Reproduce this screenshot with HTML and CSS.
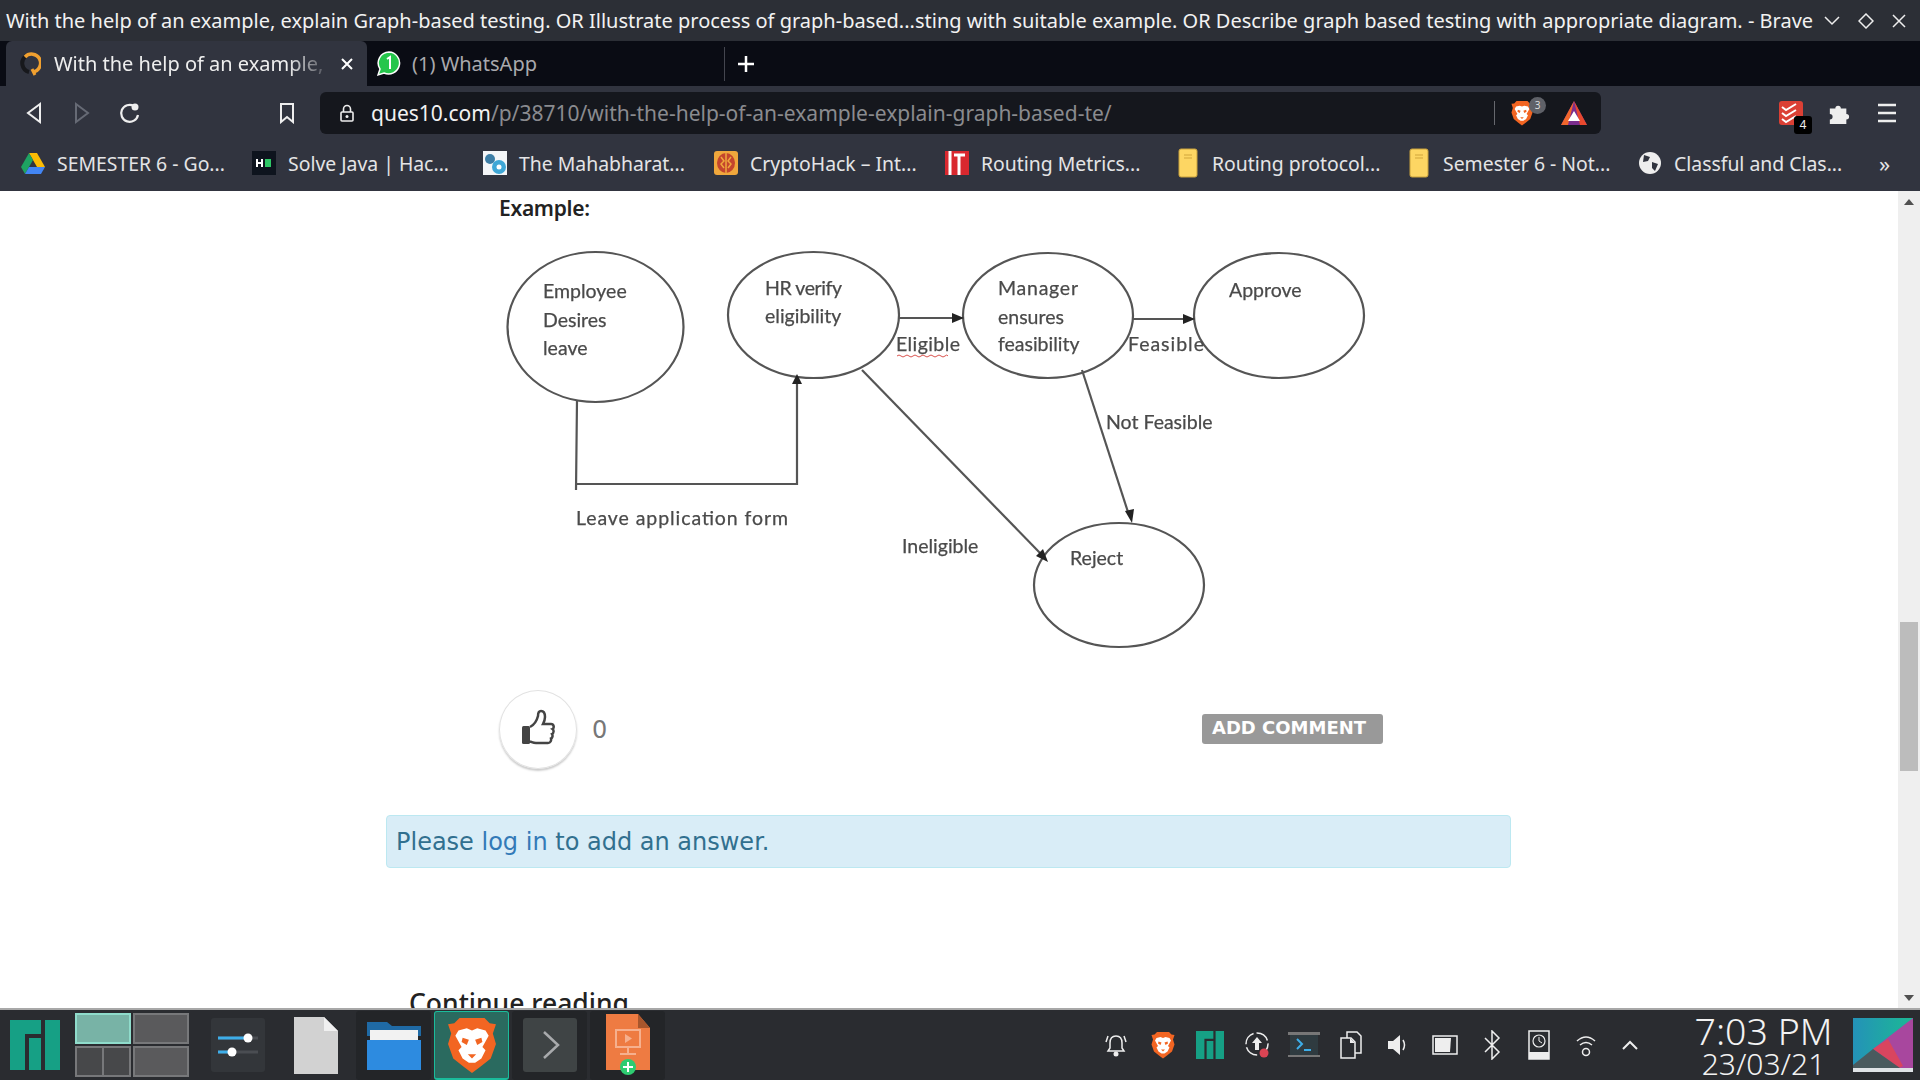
FILE: index.html
```html
<!DOCTYPE html>
<html lang="en">
<head>
    <meta charset="UTF-8">
    <title>With the help of an example, explain Graph-based testing</title>
    <link rel="stylesheet" href="styles.css">
</head>
<body>
    <svg class="defs" width="0" height="0">
        <defs>
            <linearGradient id="wall" x1="0" y1="0" x2="1" y2="0">
                <stop offset="0" stop-color="#2492b8"/>
                <stop offset="1" stop-color="#1cb994"/>
            </linearGradient>
        </defs>
        <symbol id="lion" viewBox="0 0 48 56">
            <path d="M12 2h24l5 5 6 1-3 9 3 10-5 14-10 8-8 6-8-6-10-8L1 27l3-10-3-9 6-1z" fill="#f26522"/>
            <path d="M11 14l8-2 5 2 5-2 8 2 3 5-6 11 3 3-4 8-6 4h-6l-6-4-4-8 3-3-6-11z" fill="#fff"/>
            <path d="M15 21l6 2-2 5-5-3zM33 21l-6 2 2 5 5-3zM20 37h8l-4 4z" fill="#f26522"/>
        </symbol>
        <symbol id="manjaro" viewBox="0 0 50 50">
            <path d="M0 0h31v14H15v36H0zM19 18h12v32H19zM35 0h15v50H35z" fill="#16a085"/>
        </symbol>
        <symbol id="note" viewBox="0 0 20 30">
            <rect x="1" y="1" width="18" height="28" rx="2" fill="#fdd663" stroke="#c9a13c"/>
            <path d="M6 7h8M6 10h8" stroke="#e0b64a" stroke-width="1.5"/>
        </symbol>
    </svg>

    <header class="titlebar">
        <span class="title-text">With the help of an example, explain Graph-based testing. OR Illustrate process of graph-based...sting with suitable example. OR Describe graph based testing with appropriate diagram. - Brave</span>
        <div class="win-buttons">
            <svg width="16" height="10" viewBox="0 0 16 10"><path d="M1 1l7 7 7-7" fill="none" stroke="#eee" stroke-width="1.5"/></svg>
            <svg width="16" height="16" viewBox="0 0 16 16"><path d="M8 1l7 7-7 7-7-7z" fill="none" stroke="#eee" stroke-width="1.5"/></svg>
            <svg width="14" height="14" viewBox="0 0 14 14"><path d="M1 1l12 12M13 1L1 13" stroke="#eee" stroke-width="1.5"/></svg>
        </div>
    </header>

    <div class="tabstrip">
        <div class="tab tab-active">
            <svg width="21" height="24" viewBox="0 0 21 24"><path d="M6 4a9 9 0 0 0 3 16" fill="none" stroke="#17181c" stroke-width="4"/><path d="M5 5a9 9 0 1 1 8 15" fill="none" stroke="#f0a030" stroke-width="3.500"/><path d="M12 17l3 6" stroke="#f0a030" stroke-width="3"/></svg>
            <span class="tab-title tab-fade">With the help of an example,</span>
            <svg class="tab-close" width="14" height="14" viewBox="0 0 14 14"><path d="M2 2l10 10M12 2L2 12" stroke="#fff" stroke-width="2"/></svg>
        </div>
        <div class="tab">
            <svg width="24" height="26" viewBox="0 0 24 26"><path d="M12 1a11 11 0 1 1-5 21l-6 2 2-6A11 11 0 0 1 12 1z" fill="#25c64b" stroke="#fff" stroke-width="1.5"/><path d="M10 8l3-2v12" fill="none" stroke="#fff" stroke-width="2"/></svg>
            <span class="tab-title tab-muted">(1) WhatsApp</span>
        </div>
        <div class="tab-sep"></div>
        <svg class="tab-new" width="18" height="18" viewBox="0 0 18 18"><path d="M9 1v16M1 9h16" stroke="#fff" stroke-width="2.5"/></svg>
    </div>

    <div class="toolbar">
        <svg class="tb-back" width="16" height="22" viewBox="0 0 16 22"><path d="M14 2L2 11l12 9z" fill="none" stroke="#eee" stroke-width="2"/></svg>
        <svg class="tb-fwd" width="16" height="22" viewBox="0 0 16 22"><path d="M2 2l12 9-12 9z" fill="none" stroke="#666a75" stroke-width="2"/></svg>
        <svg class="tb-reload" width="22" height="22" viewBox="0 0 22 22"><path d="M16 4a8.500 8.500 0 1 0 4 9" fill="none" stroke="#eee" stroke-width="2.200"/><circle cx="17" cy="5" r="3.500" fill="#eee"/></svg>
        <svg class="tb-mark" width="16" height="22" viewBox="0 0 16 22"><path d="M2 2h12v18l-6-5-6 5z" fill="none" stroke="#eee" stroke-width="2"/></svg>
        <div class="urlbar">
            <svg width="14" height="18" viewBox="0 0 14 18"><path d="M3.500 8V5a3.500 3.500 0 0 1 7 0v3" fill="none" stroke="#eee" stroke-width="1.600"/><rect x="1" y="8" width="12" height="9" rx="1" fill="none" stroke="#eee" stroke-width="1.600"/><circle cx="7" cy="12.500" r="1.500" fill="#eee"/></svg>
            <span class="url"><span class="url-host">ques10.com</span>/p/38710/with-the-help-of-an-example-explain-graph-based-te/</span>
            <div class="url-sep"></div>
            <div class="shield">
                <svg width="22" height="26"><use href="#lion"/></svg>
                <span class="shield-badge">3</span>
            </div>
            <svg class="bat" width="28" height="26" viewBox="0 0 28 26"><path d="M14 1l13 24H1z" fill="#7b2d8e"/><path d="M14 1l13 24H20z" fill="#e8492e"/><path d="M14 1L1 25h7z" fill="#f2672c"/><path d="M14 11l6 10H8z" fill="#fff"/></svg>
        </div>
        <div class="ext ext-todo">
            <svg width="24" height="24" viewBox="0 0 24 24"><rect width="24" height="24" rx="3" fill="#db4035"/><path d="M3 6l4 3 10-6M3 12l4 3 10-6M3 18l4 3 10-6" fill="none" stroke="#fff" stroke-width="2"/></svg>
            <span class="ext-badge">4</span>
        </div>
        <svg class="ext-puzzle" width="22" height="22" viewBox="0 0 22 24"><path d="M1 7h6a3 3 0 1 1 6 0h6v6a3 3 0 1 1 0 6v5H1v-5a3 3 0 1 0 0-6z" fill="#eee"/></svg>
        <svg class="menu" width="18" height="20" viewBox="0 0 18 20"><path d="M0 2h18M0 10h18M0 18h18" stroke="#eee" stroke-width="2.500"/></svg>
    </div>

    <nav class="bookmarks">
        <a class="bm">
            <svg width="24" height="22" viewBox="0 0 24 22"><path d="M8 1h8l8 14h-8z" fill="#fbbc04"/><path d="M8 1L0 15l4 7 8-14z" fill="#1ea362"/><path d="M4 22h16l4-7H8z" fill="#4285f4"/></svg>
            <span>SEMESTER 6 - Go...</span>
        </a>
        <a class="bm">
            <svg width="24" height="24" viewBox="0 0 24 24"><rect width="24" height="24" fill="#0e141e"/><path d="M5 8v8M10 8v8M5 12h5" stroke="#fff" stroke-width="2"/><rect x="13" y="8" width="6" height="8" fill="#2ec866"/></svg>
            <span>Solve Java | Hac...</span>
        </a>
        <a class="bm">
            <svg width="24" height="24" viewBox="0 0 24 24"><rect width="24" height="24" fill="#f4f6f8"/><circle cx="7" cy="8" r="5" fill="#3d7ea6"/><circle cx="16" cy="16" r="7" fill="#3fa7d6"/><circle cx="16" cy="16" r="2.500" fill="#fff"/></svg>
            <span>The Mahabharat...</span>
        </a>
        <a class="bm">
            <svg width="24" height="24" viewBox="0 0 24 24"><rect width="24" height="24" rx="3" fill="#f0a73c"/><ellipse cx="12" cy="12" rx="9" ry="10" fill="#c4452d"/><path d="M12 2v20M7 6l3 4-3 3 3 4M17 6l-3 4 3 3-3 4" fill="none" stroke="#f0a73c" stroke-width="1.500"/></svg>
            <span>CryptoHack – Int...</span>
        </a>
        <a class="bm">
            <svg width="24" height="24" viewBox="0 0 24 24"><rect width="24" height="24" fill="#d9282f"/><path d="M5 0v24M14 4v20" stroke="#fff" stroke-width="3"/><path d="M9 4h11" stroke="#fff" stroke-width="3"/></svg>
            <span>Routing Metrics...</span>
        </a>
        <a class="bm">
            <svg class="bm-note" width="20" height="30"><use href="#note"/></svg>
            <span>Routing protocol...</span>
        </a>
        <a class="bm">
            <svg class="bm-note" width="20" height="30"><use href="#note"/></svg>
            <span>Semester 6 - Not...</span>
        </a>
        <a class="bm">
            <svg width="24" height="24" viewBox="0 0 24 24"><circle cx="12" cy="12" r="11" fill="#eee"/><path d="M6 4l6 2-2 4-5 1zM14 11l6 2-3 7-3-3z" fill="#31343f"/></svg>
            <span>Classful and Clas...</span>
        </a>
        <span class="bm-more">»</span>
    </nav>

    <div class="page">
        <main class="content">
            <div class="answer">
                <p class="example-label">Example:</p>
                <svg class="diagram" width="880" height="420" viewBox="500 240 880 420">
                    <g class="shapes">
                        <ellipse cx="595.500" cy="327" rx="88" ry="75"/>
                        <ellipse cx="813.500" cy="315" rx="85.500" ry="63"/>
                        <ellipse cx="1048" cy="315.500" rx="85" ry="62.500"/>
                        <ellipse cx="1279" cy="315.500" rx="85" ry="62.500"/>
                        <ellipse cx="1119" cy="585" rx="85" ry="62"/>
                        <path d="M577 400L576 490M576 484H797V382"/>
                        <path d="M899 318H953"/>
                        <path d="M1133 319H1184"/>
                        <path d="M862 370L1040 553"/>
                        <path d="M1082 370L1128 512"/>
                        <path class="squiggle" d="M897 356q2-2 4 0t4 0 4 0 4 0 4 0 4 0 4 0 4 0 4 0 4 0 4 0 4 0 3 0"/>
                    </g>
                    <g class="heads">
                        <polygon points="797,374 792,384 802,384"/>
                        <polygon points="964,318 952,313 952,323"/>
                        <polygon points="1195,319 1183,314 1183,324"/>
                        <polygon points="1048,562 1036,556 1043,549"/>
                        <polygon points="1132,523 1125,511 1134,509"/>
                    </g>
                    <g class="labels">
                        <text x="543" y="298">Employee</text>
                        <text x="543" y="327">Desires</text>
                        <text x="543" y="355">leave</text>
                        <text x="765" y="295" textLength="77">HR verify</text>
                        <text x="765" y="323">eligibility</text>
                        <text x="896" y="351" textLength="64">Eligible</text>
                        <text x="998" y="295" textLength="80">Manager</text>
                        <text x="998" y="324">ensures</text>
                        <text x="998" y="351">feasibility</text>
                        <text x="1128" y="351" textLength="76">Feasible</text>
                        <text x="1229" y="297">Approve</text>
                        <text x="1106" y="429">Not Feasible</text>
                        <text x="576" y="525" textLength="212">Leave application form</text>
                        <text x="902" y="553">Ineligible</text>
                        <text x="1070" y="565">Reject</text>
                    </g>
                </svg>
                <div class="vote-row">
                    <div class="vote">
                        <div class="vote-circle">
                            <svg class="thumb-icon" width="34" height="37" viewBox="0 0 34 37"><rect x="1" y="17" width="8" height="18" rx="1.500" fill="#444"/><path d="M9 18c4-2 7-7 8-11 0-3 1-5 3-5 3 0 4 3 4 6 0 3-1 5-2 7h8c3 0 3.500 4 1.500 5 1.500 1 1.500 4-.5 5 1 1.500.5 4-1 4.500.5 2-.5 4.500-3 4.500H15c-3 0-4-1-6-1.500" fill="none" stroke="#444" stroke-width="2.500"/></svg>
                        </div>
                        <span class="vote-count">0</span>
                    </div>
                    <a class="btn-comment">ADD COMMENT</a>
                </div>
                <div class="alert">Please <a class="alert-link">log in</a> to add an answer.</div>
                <h3 class="continue">Continue reading</h3>
            </div>
        </main>
        <div class="scrollbar">
            <span class="arrow-up"></span>
            <div class="thumb"></div>
            <span class="arrow-down"></span>
        </div>
    </div>

    <footer class="panel">
        <svg class="kicker" width="50" height="50"><use href="#manjaro"/></svg>
        <div class="pager">
            <div class="desk desk-on"></div>
            <div class="desk"></div>
            <div class="desk desk-split"><i></i><i></i></div>
            <div class="desk"></div>
        </div>
        <svg class="launcher-mixer" width="54" height="54" viewBox="0 0 54 54"><rect width="54" height="54" rx="3" fill="#33363a"/><path d="M7 20h40M7 34h40" stroke="#4a4d52" stroke-width="3"/><path d="M7 20h30M7 34h14" stroke="#3daee9" stroke-width="3"/><circle cx="37" cy="20" r="4.500" fill="#fff"/><circle cx="21" cy="34" r="4.500" fill="#fff"/></svg>
        <svg class="launcher-file" width="44" height="57" viewBox="0 0 44 57"><path d="M0 0h30l14 14v43H0z" fill="#d2d2d2"/><path d="M30 0l14 14H30z" fill="#f0f0f0"/></svg>
        <div class="task">
            <svg width="54" height="50" viewBox="0 0 54 50"><path d="M0 2h20l5 4h29v10H0z" fill="#1f6aa5"/><rect x="3" y="10" width="48" height="12" fill="#f2f2f2"/><path d="M0 20h54v30H0z" fill="#2d8be0"/></svg>
        </div>
        <div class="task task-on">
            <svg width="50" height="60"><use href="#lion"/></svg>
        </div>
        <div class="task">
            <svg width="54" height="54" viewBox="0 0 54 54"><rect width="54" height="54" rx="3" fill="#3f4445"/><path d="M21 14l14 13-14 13" fill="none" stroke="#a8aaac" stroke-width="2.500"/></svg>
        </div>
        <div class="task">
            <svg width="44" height="62" viewBox="0 0 44 62"><path d="M0 0h32l12 14v42H0z" fill="#ee7b42"/><path d="M32 0l12 14H32z" fill="#a8562c"/><rect x="10" y="16" width="24" height="17" fill="none" stroke="#f6b08e" stroke-width="2"/><path d="M19 20l7 4.500-7 4.500z" fill="#f6b08e"/><path d="M22 33v6M14 40h16" stroke="#f6b08e" stroke-width="2"/><circle cx="22" cy="53" r="8" fill="#2ecc71"/><path d="M22 48v10M17 53h10" stroke="#fff" stroke-width="2"/></svg>
        </div>
        <div class="tray">
            <svg width="24" height="26" viewBox="0 0 24 26"><path d="M12 4c-4 0-6 3-6 7v5l-2 3h16l-2-3v-5c0-4-2-7-6-7z" fill="none" stroke="#eee" stroke-width="1.500"/><path d="M2 10l2-6M22 10l-2-6" stroke="#eee" stroke-width="1.500"/><circle cx="12" cy="22" r="2.500" fill="#eee"/></svg>
            <svg width="24" height="30"><use href="#lion"/></svg>
            <svg width="28" height="28"><use href="#manjaro"/></svg>
            <svg width="26" height="28" viewBox="0 0 26 28"><circle cx="13" cy="13" r="11" fill="none" stroke="#eee" stroke-width="1.500" stroke-dasharray="14 3"/><path d="M13 6l5 6h-3v7h-4v-7H8z" fill="#eee"/><circle cx="20" cy="22" r="4.500" fill="#da4453"/></svg>
            <svg width="32" height="30" viewBox="0 0 32 30"><rect y="2" width="32" height="3" fill="#777"/><rect x="2" y="5" width="28" height="20" fill="#2f3b40"/><rect y="25" width="32" height="2" fill="#777"/><path d="M9 9l5 5-5 5" fill="none" stroke="#3daee9" stroke-width="2"/><path d="M16 20h7" stroke="#3daee9" stroke-width="2"/></svg>
            <svg width="22" height="28" viewBox="0 0 22 28"><path d="M7 1h10l4 4v17H7z" fill="#2a2c30" stroke="#eee" stroke-width="1.500"/><path d="M1 7h10l4 4v16H1z" fill="#2a2c30" stroke="#eee" stroke-width="1.500"/><path d="M10 7l5 5h-5z" fill="#eee"/></svg>
            <svg width="22" height="26" viewBox="0 0 22 26"><path d="M1 9h5l7-6v20l-7-6H1z" fill="#eee"/><path d="M16 8q3 5 0 10" fill="none" stroke="#eee" stroke-width="1.500"/></svg>
            <svg width="26" height="20" viewBox="0 0 26 20"><rect x="1" y="1" width="24" height="18" fill="none" stroke="#eee" stroke-width="1.500"/><path d="M3 3h16l-1 14H3z" fill="#eee"/></svg>
            <svg width="18" height="30" viewBox="0 0 18 30"><path d="M2 8l14 14-7 7V1l7 7L2 22" fill="none" stroke="#eee" stroke-width="1.500"/></svg>
            <svg width="22" height="30" viewBox="0 0 22 30"><rect x="1" y="1" width="20" height="28" fill="none" stroke="#eee" stroke-width="1.500"/><circle cx="11" cy="11" r="6" fill="none" stroke="#eee" stroke-width="1.200"/><path d="M11 7v4l3 2" fill="none" stroke="#eee"/><rect x="1" y="22" width="20" height="7" fill="#eee"/></svg>
            <svg width="22" height="26" viewBox="0 0 22 26"><path d="M2 9q9-8 18 0M5 13q6-5 12 0" fill="none" stroke="#eee" stroke-width="1.500"/><circle cx="11" cy="20" r="3.500" fill="none" stroke="#eee" stroke-width="1.500"/></svg>
            <svg class="tray-last" width="16" height="10" viewBox="0 0 16 10"><path d="M1 9l7-7 7 7" fill="none" stroke="#eee" stroke-width="2"/></svg>
        </div>
        <div class="clock">
            <span class="clock-time">7:03 PM</span>
            <span class="clock-date">23/03/21</span>
        </div>
        <svg class="desk-thumb" width="60" height="54" viewBox="0 0 60 54">
            <rect width="60" height="50" fill="url(#wall)"/>
            <polygon points="60,0 60,50 46,50 20,31" fill="#a8479e"/>
            <polygon points="20,31 35,21 50,48 46,50" fill="#d9455f"/>
            <polygon points="0,47 20,31 47,50 0,50" fill="#4a5a5e"/>
            <rect y="50" width="60" height="4" fill="#dfe3e6"/>
        </svg>
    </footer>
</body>
</html>
```

FILE: styles.css
```css
* {
    box-sizing: border-box;
}
html, body {
    margin: 0;
    height: 100%;
    overflow: hidden;
}
body {
    display: flex;
    flex-direction: column;
    height: 1080px;
    font-family: "Noto Sans", sans-serif;
    background-color: #fff;
}
svg {
    display: block;
    flex-shrink: 0;
}
.defs {
    position: absolute;
}

/* window title */
.titlebar {
    height: 41px;
    display: flex;
    align-items: center;
    padding-left: 6px;
    background-color: #2c2f36;
    color: #f2f2f2;
    font-size: 20px;
    white-space: nowrap;
}
.title-text {
    width: 1818px;
}
.win-buttons {
    display: flex;
    align-items: center;
    gap: 18px;
}

/* tabs */
.tabstrip {
    height: 45px;
    display: flex;
    align-items: center;
    padding-left: 6px;
    background-color: #0a0c14;
}
.tab {
    height: 45px;
    display: flex;
    align-items: center;
    gap: 11px;
    font-size: 20px;
    white-space: nowrap;
}
.tab-active {
    width: 361px;
    padding: 0 13px 0 14px;
    gap: 13px;
    background-color: #31343f;
    border-radius: 6px 6px 0 0;
    color: #eee;
}
.tab-fade {
    width: 274px;
    overflow: hidden;
    -webkit-mask-image: linear-gradient(to right, #000 86%, rgba(0,0,0,0.15) 100%);
    mask-image: linear-gradient(to right, #000 86%, rgba(0,0,0,0.15) 100%);
}
.tab-close {
    margin-left: 1px;
}
.tab-active + .tab {
    width: 357px;
    padding-left: 10px;
}
.tab-muted {
    color: #a9a9ad;
}
.tab-sep {
    width: 1px;
    height: 34px;
    background-color: #44464f;
}
.tab-new {
    margin-left: 12px;
}

/* address bar */
.toolbar {
    height: 54px;
    display: flex;
    align-items: center;
    background-color: #31343f;
}
.tb-back {
    margin-left: 26px;
}
.tb-fwd {
    margin-left: 32px;
}
.tb-reload {
    margin-left: 28px;
}
.tb-mark {
    margin-left: 139px;
}
.urlbar {
    width: 1281px;
    height: 42px;
    margin-left: 25px;
    padding-left: 20px;
    display: flex;
    align-items: center;
    background-color: #15171d;
    border-radius: 6px;
}
.url {
    width: 1123px;
    margin-left: 17px;
    font-size: 21px;
    color: #8a8b8f;
    white-space: nowrap;
}
.url-host {
    color: #f2f2f2;
}
.url-sep {
    width: 1px;
    height: 24px;
    background-color: #66686e;
}
.shield {
    position: relative;
    margin-left: 16px;
}
.shield-badge {
    position: absolute;
    left: 18px;
    top: -3px;
    width: 17px;
    height: 17px;
    border-radius: 50%;
    background-color: #5f6168;
    color: #ddd;
    font-size: 10px;
    line-height: 17px;
    text-align: center;
}
.bat {
    margin-left: 27px;
}
.ext-todo {
    position: relative;
    margin-left: 178px;
}
.ext-badge {
    position: absolute;
    left: 15px;
    top: 15px;
    width: 18px;
    height: 18px;
    border-radius: 3px;
    background-color: #000;
    color: #eee;
    font-size: 12px;
    line-height: 18px;
    text-align: center;
}
.ext-puzzle {
    margin-left: 25px;
}
.menu {
    margin-left: 28px;
}

/* bookmarks */
.bookmarks {
    height: 51px;
    display: flex;
    align-items: center;
    padding: 0 0 5px 21px;
    background-color: #31343f;
    color: #e4e4e6;
    font-size: 19.4px;
    white-space: nowrap;
}
.bm {
    width: 231px;
    display: flex;
    align-items: center;
    gap: 12px;
}
.bm-note {
    margin: 0 2px;
}
.bm-more {
    margin-left: 10px;
    font-size: 22px;
}

/* page */
.page {
    height: 817px;
    display: flex;
    overflow: hidden;
}
.content {
    flex: 1;
    padding-left: 386px;
    background-color: #fff;
    overflow: hidden;
}
.answer {
    width: 1125px;
}
.example-label {
    height: 49px;
    margin: 0 0 0 113px;
    padding-top: 3px;
    font-size: 21px;
    font-weight: 600;
    color: #222;
    letter-spacing: -0.3px;
}
.diagram {
    margin-left: 114px;
    filter: blur(0.5px);
}
.shapes {
    fill: none;
    stroke: #555;
    stroke-width: 2.2;
}
.squiggle {
    stroke: #d9534f;
    stroke-width: 1;
}
.heads {
    fill: #222;
}
.labels {
    font-family: Lato, sans-serif;
    font-size: 19.5px;
    fill: #4a4a4a;
    stroke: #4a4a4a;
    stroke-width: 0.25;
}
.vote-row {
    width: 884px;
    height: 79px;
    margin: 30px 0 0 113px;
    display: flex;
    align-items: center;
    justify-content: space-between;
}
.vote {
    display: flex;
    align-items: center;
    gap: 15px;
}
.vote-circle {
    width: 78px;
    height: 79px;
    display: flex;
    align-items: center;
    justify-content: center;
    border: 1px solid #e2e2e2;
    border-radius: 50%;
    box-shadow: 0 2px 2px #ccc;
}
.thumb-icon {
    margin: -4px 1px 0 0;
}
.vote-count {
    font-family: "DejaVu Sans", sans-serif;
    font-size: 24px;
    color: #777;
}
.btn-comment {
    width: 181px;
    height: 30px;
    margin-top: -2px;
    padding-left: 10px;
    background-color: #999;
    border-radius: 3px;
    color: #fff;
    font-family: "DejaVu Sans", sans-serif;
    font-size: 18px;
    font-weight: 700;
    line-height: 28px;
}
.alert {
    height: 53px;
    margin-top: 46px;
    padding-left: 9px;
    background-color: #d9edf7;
    border: 1px solid #bce8f1;
    border-radius: 4px;
    color: #31708f;
    font-family: "DejaVu Sans", sans-serif;
    font-size: 24px;
    line-height: 52px;
}
.alert-link {
    color: #337ab7;
}
.continue {
    margin: 116px 0 0 23px;
    font-size: 26.5px;
    font-weight: 500;
    line-height: 38px;
    color: #222;
}
.scrollbar {
    width: 22px;
    display: flex;
    flex-direction: column;
    align-items: center;
    background-color: #efefef;
}
.arrow-up {
    width: 0;
    height: 0;
    margin-top: 8px;
    border: 5px solid transparent;
    border-top: 0;
    border-bottom: 6px solid #505050;
}
.thumb {
    width: 18px;
    height: 149px;
    margin-top: 417px;
    background-color: #bcbcbc;
}
.arrow-down {
    width: 0;
    height: 0;
    margin-top: auto;
    margin-bottom: 7px;
    border: 5px solid transparent;
    border-bottom: 0;
    border-top: 6px solid #505050;
}

/* desktop panel */
.panel {
    height: 72px;
    display: flex;
    align-items: center;
    background-color: #2a2c30;
    border-top: 2px solid #a8a8a8;
}
.kicker {
    margin-left: 10px;
}
.pager {
    width: 114px;
    margin-left: 15px;
    display: grid;
    grid-template-columns: 1fr 1fr;
    gap: 2px;
}
.desk {
    height: 31px;
    background-color: #5a5a5c;
    border: 2px solid #77787a;
}
.desk-on {
    background-color: #78b3a6;
    border-color: #8fdccb;
}
.desk-split {
    display: flex;
    gap: 2px;
    background-color: #77787a;
}
.desk-split i {
    flex: 1;
    background-color: #47484a;
}
.launcher-mixer {
    margin-left: 22px;
}
.launcher-file {
    margin-left: 29px;
    margin-right: 18px;
}
.task {
    width: 75px;
    height: 69px;
    margin-right: 3px;
    display: flex;
    align-items: center;
    justify-content: center;
    background-color: #232528;
    border-radius: 3px;
}
.task-on {
    background-color: #2a6a5f;
    border: 1px solid #1abc9c;
    border-bottom-width: 2px;
}
.tray {
    margin-left: 424px;
    display: grid;
    grid-template-columns: repeat(12, 47px);
    align-items: center;
    justify-items: center;
}
.tray-last {
    margin-right: 5px;
}
.clock {
    width: 137px;
    margin-left: 39px;
    display: flex;
    flex-direction: column;
    align-items: center;
    color: #f2f2f2;
    white-space: nowrap;
}
.clock-time {
    margin-top: 2px;
    font-size: 37.5px;
    font-weight: 300;
    line-height: 38px;
}
.clock-date {
    margin-top: -2px;
    font-size: 30px;
    font-weight: 300;
    line-height: 32px;
}
.desk-thumb {
    margin-left: 21px;
}
```
